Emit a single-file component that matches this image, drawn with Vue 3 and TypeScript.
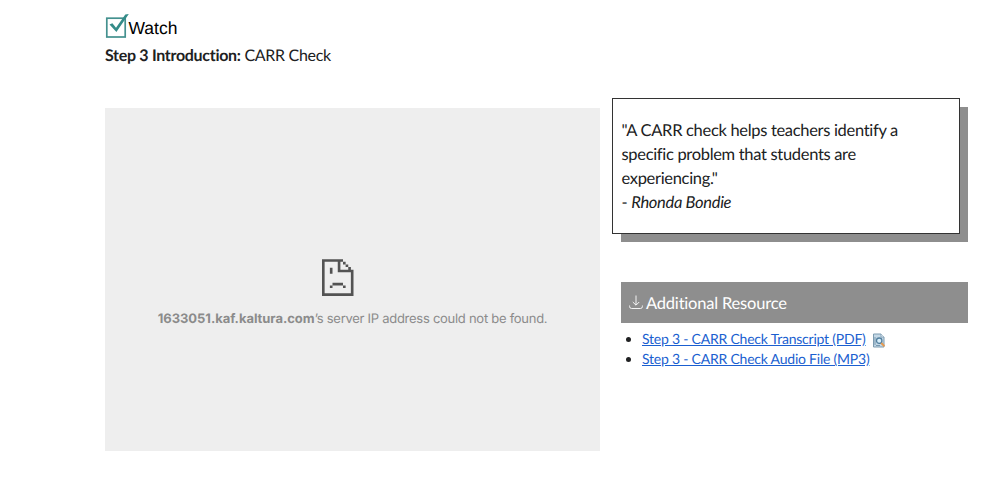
<script setup lang="ts">
interface Resource {
  label: string
  preview: boolean
}

const resources: Resource[] = [
  { label: 'Step 3 - CARR Check Transcript (PDF)', preview: true },
  { label: 'Step 3 - CARR Check Audio File (MP3)', preview: false },
]
</script>

<template>
  <main class="page">
    <header class="heading">
      <div class="watch">
        <svg class="check" viewBox="0 0 25 26" aria-hidden="true">
          <rect x="1.8" y="5.2" width="18.4" height="18.8" fill="#fff" stroke="#44918f" stroke-width="1.7" />
          <path d="M4.5 11.4 7.4 10.2 11 14.8 20.3 1.6 23.8 1 11.4 19Z" fill="#348c89" />
        </svg>
        <span class="watch-label">Watch</span>
      </div>
      <p class="intro"><strong>Step 3 Introduction:</strong> CARR Check</p>
    </header>
    <div class="columns">
      <section class="player">
        <svg class="sad" viewBox="0 0 12 14" aria-hidden="true">
          <path
            fill="#535353"
            d="M0 0H8V1H9V2H10V3H11V4H12V14H0ZM1 1V13H11V5H6V1ZM7 1V4H10V3H9V2H8V1ZM3 3.3H4V5.6H3ZM4 9H8V10H4ZM3 10H4V11H3ZM8 10H9V11H8Z"
            fill-rule="evenodd"
          />
        </svg>
        <p class="error"><strong>1633051.kaf.kaltura.com</strong>’s server IP address could not be found.</p>
      </section>
      <aside class="side">
        <blockquote class="quote">
          <p>"A CARR check helps teachers identify a specific problem that students are experiencing."</p>
          <p class="author">- <em>Rhonda Bondie</em></p>
        </blockquote>
        <h2 class="bar">
          <svg class="download" viewBox="0 0 14 15" aria-hidden="true">
            <path d="M7 .5V10M3.8 7 7 10.2 10.2 7M.6 10.5V11.5Q.6 13.5 2.6 13.5H11.4Q13.4 13.5 13.4 11.5V10.5" fill="none" stroke="#fff" stroke-width=".9" />
          </svg>
          <span>Additional Resource</span>
        </h2>
        <ul class="links">
          <li v-for="item in resources" :key="item.label">
            <a href="#">{{ item.label }}</a>
            <svg v-if="item.preview" class="preview" viewBox="0 0 14 15" aria-hidden="true">
              <path d="M1.5 1H9L12 4V14H1.5Z" fill="#c4d8e6" stroke="#7c9bb0" />
              <path d="M9 1V4H12" fill="#edf5fa" stroke="#7c9bb0" stroke-width=".8" />
              <path d="M3 4V12M4 12.5H8" stroke="#7899b0" />
              <circle cx="7.2" cy="7.7" r="2.7" fill="#d9effb" stroke="#54809f" stroke-width="1.3" />
              <path d="M9.3 10 12.4 13.2" stroke="#e59a50" stroke-width="2" />
            </svg>
          </li>
        </ul>
      </aside>
    </div>
  </main>
</template>

<style>
body {
  margin: 0;
  background: #fff;
}
</style>

<style scoped>
.page {
  box-sizing: border-box;
  height: 497px;
  padding: 13px 31px 0 105px;
  overflow: hidden;
  color: #202122;
  font-family: Lato, sans-serif;
  text-rendering: geometricPrecision;
}
p,
h2,
ul,
blockquote {
  margin: 0;
  padding: 0;
}
.heading {
  height: 95px;
}
.watch {
  display: flex;
  height: 27px;
}
.check {
  width: 25px;
  height: 26px;
}
.watch-label {
  margin-left: -1.5px;
  color: #000;
  font: 17.5px/31px "Liberation Sans", Arial, sans-serif;
}
.intro {
  margin-top: 4px;
  font-size: 16px;
  line-height: 24px;
  letter-spacing: -0.3px;
}
.columns {
  display: flex;
  align-items: flex-start;
  gap: 21px;
}
.player {
  display: flex;
  flex-direction: column;
  align-items: center;
  box-sizing: border-box;
  width: 495px;
  height: 343.4px;
  padding-top: 151px;
  background: #eee;
}
.sad {
  width: 31.5px;
  height: 37px;
  margin-right: 29px;
}
.error {
  margin-top: 13px;
  color: #8b8b8b;
  font: 13px/20px Inter, sans-serif;
  letter-spacing: -0.27px;
  white-space: nowrap;
}
.error strong {
  letter-spacing: -0.04px;
}
.side {
  width: 347px;
}
.quote {
  box-sizing: border-box;
  width: 348px;
  height: 136px;
  margin: -10px 0 0 -9px;
  padding: 19px 40px 0 8.5px;
  border: 1px solid #333;
  background: #fff;
  box-shadow: 8.5px 8.5px 0 -0.5px #8e8e8e;
  font-size: 16.5px;
  line-height: 24px;
  letter-spacing: -0.32px;
}
.bar {
  display: flex;
  align-items: center;
  gap: 3px;
  height: 41px;
  margin-top: 48px;
  padding-left: 8px;
  background: #8e8e8e;
  color: #fff;
  font-size: 16.5px;
  font-weight: 400;
  letter-spacing: -0.2px;
}
.download {
  width: 14px;
  height: 15px;
}
.links {
  margin-top: 6px;
  padding-left: 21px;
  font-size: 14px;
  line-height: 20.4px;
  letter-spacing: -0.22px;
}
.links a {
  color: #1b5fd0;
  text-decoration: underline;
}
.preview {
  width: 14px;
  height: 15px;
  margin: -2px 0 -2px 6px;
  vertical-align: -2px;
}
</style>
